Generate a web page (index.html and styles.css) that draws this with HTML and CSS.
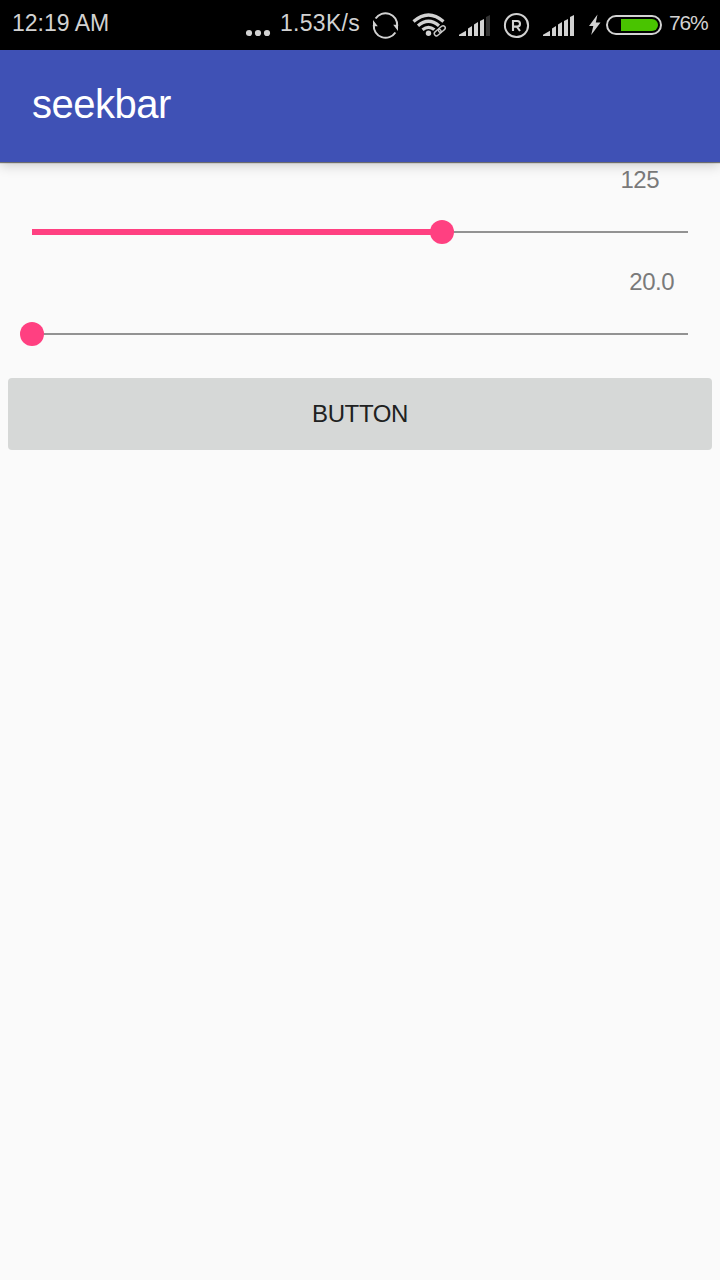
FILE: index.html
```html
<!DOCTYPE html>
<html lang="en">
<head>
<meta charset="utf-8">
<title>seekbar</title>
<link rel="stylesheet" href="styles.css">
</head>
<body>
<header class="status">
  <span class="time">12:19 AM</span>
  <svg class="dots" width="26" height="50" fill="#d2d2d2"><circle cx="3" cy="33" r="3.1"/><circle cx="12" cy="33" r="3.1"/><circle cx="21" cy="33" r="3.1"/></svg>
  <span class="speed">1.53K/s</span>
  <svg class="icons" width="236" height="50" viewBox="366 0 236 50">
    <g fill="none" stroke="#d2d2d2" stroke-width="2">
      <path d="M375.6 18.5A11.8 11.8 0 0 1 397.2 26"/>
      <path d="M395.4 32.5A11.8 11.8 0 0 1 373.8 25"/>
    </g>
    <path d="M373 20v6.2h4.8zM398 31v-6.2h-4.8z" fill="#d2d2d2"/>
    <g fill="none" stroke="#d2d2d2" stroke-width="3.2">
      <path d="M413.5 21.5Q428.5 8.5 443.5 21.5"/>
      <path d="M418 25.8Q428.5 16.7 439 25.8"/>
      <path d="M422.5 29.7Q428.5 24.9 434.5 29.7"/>
    </g>
    <circle cx="428.5" cy="33.3" r="2.7" fill="#d2d2d2"/>
    <rect x="434" y="30" width="7.5" height="4.5" rx="2.2" transform="rotate(-40 437.75 32.5)" fill="none" stroke="#000" stroke-width="3.5"/>
    <g fill="none" stroke="#c8c8c8" stroke-width="1.4">
      <rect x="433.9" y="30.3" width="7.6" height="4.4" rx="2.2" transform="rotate(-40 437.75 32.5)"/>
      <rect x="438" y="26.8" width="7.6" height="4.4" rx="2.2" transform="rotate(-40 441.8 29)"/>
    </g>
    <g fill="#d2d2d2">
      <path d="M459 36v-1.3l7-4V36zM468 36v-7.5l4-2.5V36zM474 36V24.5l4-2.5v14zM480 36V21l4-2v17z"/>
      <path d="M486 36V17l4-2v21z" fill="#333"/>
      <path d="M543 36v-1.3l7-4V36zM552 36v-7.5l4-2.5V36zM558 36V24.5l4-2.5v14zM564 36V21l4-2v17zM570 36V17l4-2v21z"/>
      <path d="M597.5 14.5L589 26h4.3l-2.1 9 9.3-12.5h-4.7z"/>
    </g>
    <circle cx="516.5" cy="25.5" r="11.6" fill="none" stroke="#d2d2d2" stroke-width="2"/>
    <path d="M513 31V21h4.2q2.8 0 2.8 2.8t-2.8 2.8H513M516.8 26.6L520 31" fill="none" stroke="#d2d2d2" stroke-width="2.1"/>
  </svg>
  <svg class="battery" width="60" height="50" viewBox="604 0 60 50">
    <rect x="607" y="16" width="54" height="18" rx="9" fill="none" stroke="#d2d2d2" stroke-width="2"/>
    <path d="M621 19h31a6 6 0 0 1 0 12h-31z" fill="#49c400"/>
  </svg>
  <span class="percent">76%</span>
</header>
<div class="toolbar"><h1>seekbar</h1></div>
<main>
  <div class="value first">125</div>
  <div class="slider"><div class="line"></div><div class="fill"></div><div class="thumb"></div></div>
  <div class="value second">20.0</div>
  <div class="slider zero"><div class="line"></div><div class="thumb"></div></div>
  <button class="button">BUTTON</button>
</main>
</body>
</html>
```
FILE: styles.css
```css
* { box-sizing: border-box; }
body { margin: 0; width: 720px; height: 1280px; overflow: hidden; background: #fafafa; font-family: "Liberation Sans", Arial, sans-serif; }
.status { display: flex; height: 50px; background: #000; color: #d2d2d2; font-size: 23px; line-height: 46px; white-space: nowrap; }
.status svg { display: block; flex: none; }
.time { width: 234px; padding-left: 12px; flex: none; }
.dots { margin-left: 12px; }
.speed { width: 86px; margin-left: 8px; flex: none; letter-spacing: 0.3px; }
.battery { margin-left: 2px; }
.percent { margin-left: 5px; font-size: 21px; letter-spacing: -1.2px; }
.toolbar { position: relative; display: flex; align-items: center; height: 112px; padding-left: 32px; background: #3f51b5; box-shadow: 0 1px 1px rgba(0,0,0,.5), 0 3px 12px rgba(0,0,0,.2); }
h1 { margin: 0; padding-bottom: 4px; color: #fff; font-size: 40px; font-weight: 400; letter-spacing: -0.5px; line-height: 48px; }
.value { display: flex; justify-content: flex-end; height: 34px; color: #7a7a7a; font-size: 24px; line-height: 36px; letter-spacing: -0.5px; }
.first { padding-right: 61px; }
.second { padding-right: 46px; }
.slider { position: relative; height: 36px; margin: 18px 32px 14px; }
.value.second + .slider { margin-bottom: 26px; }
.line { position: absolute; left: 0; right: 0; top: 17px; height: 2px; background: #929292; }
.fill { position: absolute; left: 0; width: 410px; top: 15px; height: 6px; background: #ff4081; }
.thumb { position: absolute; left: 398px; top: 6px; width: 24px; height: 24px; border-radius: 50%; background: #ff4081; }
.zero .thumb { left: -12px; }
.button { display: block; width: 704px; height: 72px; margin: 0 8px; padding: 0 0 1px; border: 0; border-radius: 4px; background: #d6d8d7; color: #202121; font: 400 24px "Liberation Sans", Arial, sans-serif; letter-spacing: -0.4px; }
```
